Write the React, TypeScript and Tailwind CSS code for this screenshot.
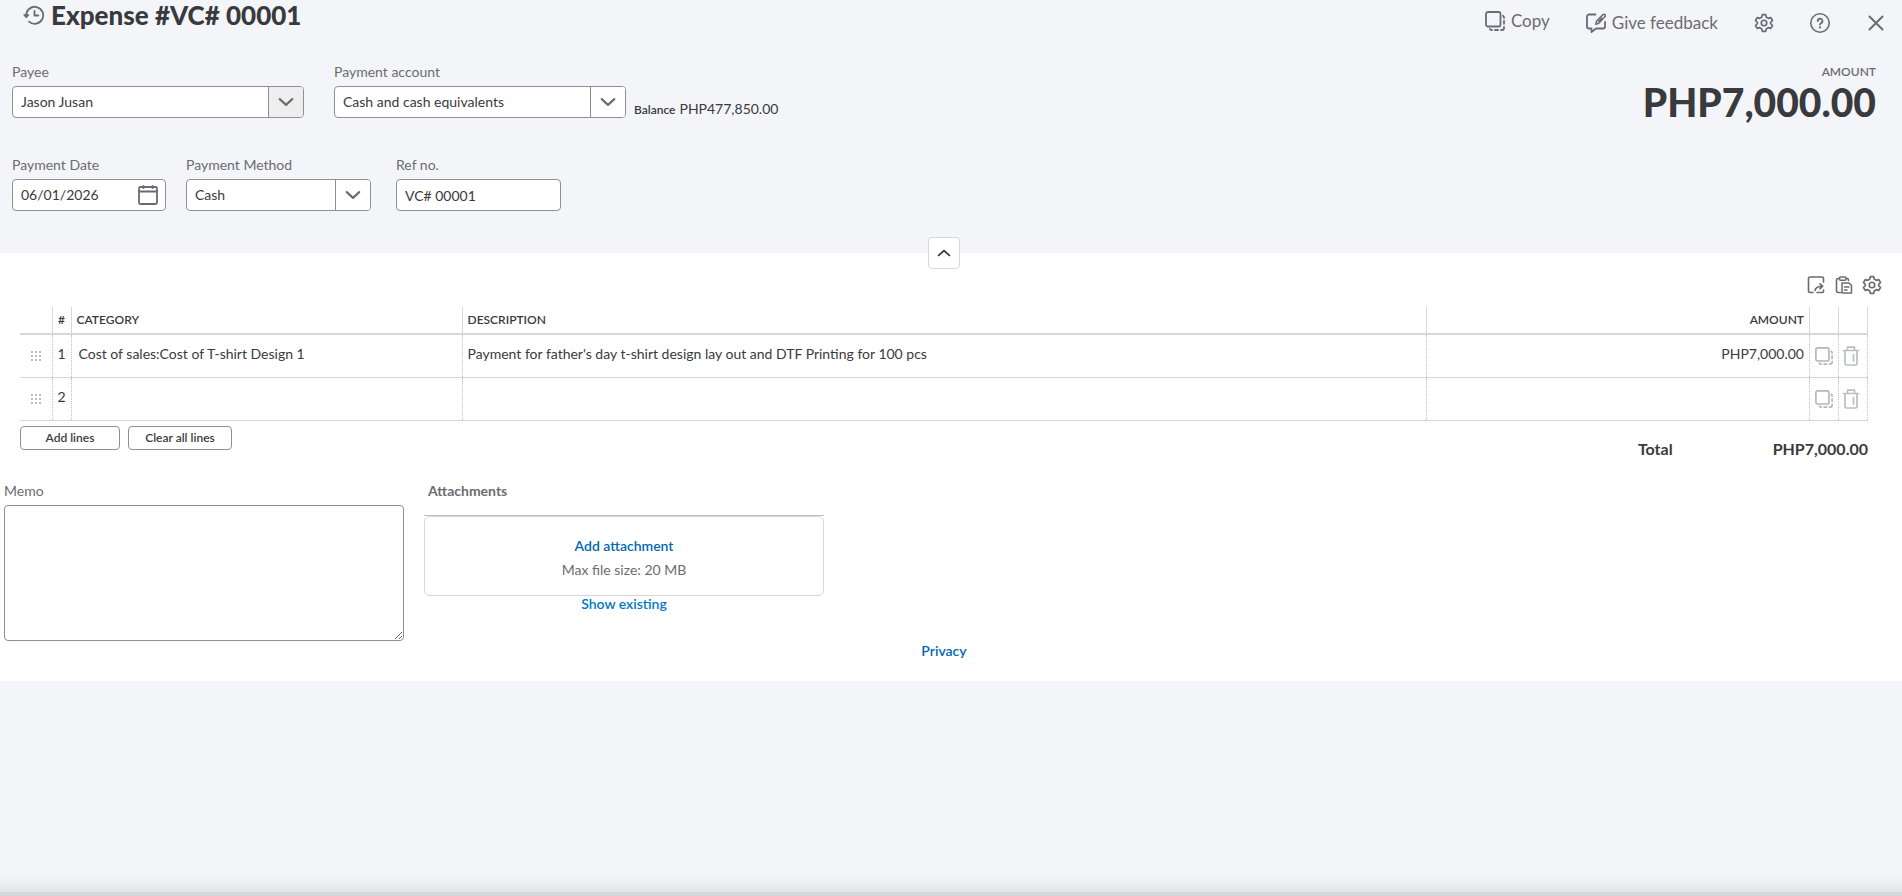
import { useState } from "react";
import type { ReactNode } from "react";

type Line = {
  id: number;
  category: string;
  description: string;
  amount: string;
};

type SelectFieldProps = {
  id: string;
  label: string;
  options: string[];
  width: string;
  active?: boolean;
};

const initialLines: Line[] = [
  {
    id: 1,
    category: "Cost of sales:Cost of T-shirt Design 1",
    description: "Payment for father's day t-shirt design lay out and DTF Printing for 100 pcs",
    amount: "PHP7,000.00",
  },
  { id: 2, category: "", description: "", amount: "" },
];

function Icon({
  className,
  size = 24,
  children,
}: {
  className: string;
  size?: number;
  children: ReactNode;
}) {
  return (
    <svg
      viewBox={`0 0 ${size} ${size}`}
      fill="none"
      stroke="currentColor"
      strokeWidth="2"
      strokeLinecap="round"
      strokeLinejoin="round"
      className={className}
      aria-hidden="true"
    >
      {children}
    </svg>
  );
}

function HistoryIcon() {
  return (
    <Icon className="h-6 w-6">
      <path d="M5.2 12.5A8.5 8.5 0 1 1 8 18.600" strokeWidth="1.800" />
      <path d="M3 11.800h4.600l-2.300 2.800z" fill="currentColor" strokeWidth="1.200" />
      <path d="M13.500 8v4.500h3.800" strokeWidth="1.800" />
    </Icon>
  );
}

function CopyIcon({ className }: { className: string }) {
  return (
    <Icon className={className} size={20}>
      <rect x="1" y="1" width="14.500" height="14.500" rx="2" strokeWidth="1.800" />
      <path
        d="M18 4.800a2 2 0 0 1 1 1.700v.5M19 9.800v3M19 16v1a2 2 0 0 1-2 2h-1M13 19h-3M7 19h-.500a2 2 0 0 1-1.700-1"
        strokeWidth="1.800"
      />
    </Icon>
  );
}

function FeedbackIcon() {
  return (
    <Icon className="h-5 w-5" size={20}>
      <path
        d="M9.500 1.500H3a2 2 0 0 0-2 2v10a2 2 0 0 0 2 2h2.500V19l4.500-3.500h7a2 2 0 0 0 2-2V9"
        strokeWidth="1.800"
      />
      <path
        d="M9.800 11.200l.9-3.200 6.300-6.400a1.400 1.400 0 0 1 2 2L12.800 10.200zM12.800 8.200l3-3"
        strokeWidth="1.500"
      />
    </Icon>
  );
}

function GearIcon({ className }: { className: string }) {
  return (
    <Icon className={className}>
      <path d="M10 2h4l.8 3 2.400 1.400 3-.9 2 3.500-2.200 2.200v1.600l2.200 2.200-2 3.500-3-.9-2.400 1.400-.8 3h-4l-.8-3-2.400-1.400-3 .9-2-3.500L4 12.800v-1.600L1.800 9l2-3.500 3 .9L9.200 5z" />
      <circle cx="12" cy="12" r="3.300" />
    </Icon>
  );
}

function HelpIcon() {
  return (
    <Icon className="h-6 w-6">
      <circle cx="12" cy="12" r="9.200" strokeWidth="1.600" />
      <path d="M9.800 10a2.300 2.300 0 1 1 3.400 2c-.8.400-1.200.8-1.200 1.600" strokeWidth="1.900" />
      <path d="M12 16.300v.1" strokeWidth="2.200" />
    </Icon>
  );
}

function CalendarIcon() {
  return (
    <Icon className="h-5 w-5" size={20}>
      <rect x="1" y="2" width="18" height="17" rx="1.500" strokeWidth="1.800" />
      <path d="M1 6.500h18M5.500 1v2M14.500 1v2" strokeWidth="1.800" />
    </Icon>
  );
}

function TrashIcon() {
  return (
    <Icon className="h-5 w-5" size={20}>
      <path d="M2.500 4.500h15M6.500 4.200V1.200h7v3M4 5v12.500A1.500 1.500 0 0 0 5.500 19h9a1.500 1.500 0 0 0 1.500-1.500V5M12.500 8.500v6.500" strokeWidth="1.700" />
    </Icon>
  );
}

function ExportIcon() {
  return (
    <Icon className="h-5 w-5" size={20}>
      <path d="M7 17.500H4A1.500 1.500 0 0 1 2.500 16V3.500A1.500 1.500 0 0 1 4 2h12a1.500 1.500 0 0 1 1.500 1.500V7" strokeWidth="1.600" />
      <path d="M9 15.500c.5-2.800 2.500-4.300 7.500-4.300M14 8.800l2.700 2.400-2.700 2.600M17.500 15v1.500a1 1 0 0 1-1 1h-5.500" strokeWidth="1.600" />
    </Icon>
  );
}

function PasteIcon() {
  return (
    <Icon className="h-5 w-5" size={20}>
      <path d="M5.500 3.500H4A1.500 1.500 0 0 0 2.500 5v11A1.500 1.500 0 0 0 4 17.500h2.500M12 3.500h1A1.500 1.500 0 0 1 14.500 5v.5" strokeWidth="1.600" />
      <rect x="5.500" y="2" width="6.500" height="3.200" rx="1" strokeWidth="1.500" />
      <path d="M8 8h7l2.500 2.500v7.500H8zM10.500 12h4.500M10.500 15h2.500" strokeWidth="1.500" />
    </Icon>
  );
}

function DragHandle() {
  return (
    <svg viewBox="0 0 12 12" className="h-3 w-3" fill="currentColor" aria-hidden="true">
      {[1, 5, 9].map((y) =>
        [1, 5, 9].map((x) => <rect key={`${x}-${y}`} x={x} y={y} width="2" height="2" />)
      )}
    </svg>
  );
}

function SelectField({ id, label, options, width, active }: SelectFieldProps) {
  return (
    <div className={`flex flex-col gap-1 ${width}`}>
      <label htmlFor={id} className="text-sm leading-5 text-[#6b6c72]">
        {label}
      </label>
      <div className="relative">
        <select
          id={id}
          className="block h-8 w-full appearance-none rounded-sm border border-[#8d9096] bg-white pr-10 pl-2 text-sm"
        >
          {options.map((o) => (
            <option key={o}>{o}</option>
          ))}
        </select>
        <span
          className={`pointer-events-none absolute inset-y-px right-px flex w-[35px] items-center justify-center rounded-r-[3px] border-l border-[#8d9096] text-[#6b6c72] ${
            active ? "bg-[#eeeeef]" : "bg-white"
          }`}
        >
          <Icon className="h-5 w-5">
            <path d="M4.500 8.500l7.500 7 7.500-7" strokeWidth="2.600" />
          </Icon>
        </span>
      </div>
    </div>
  );
}

export default function App() {
  const [lines, setLines] = useState<Line[]>(initialLines);
  const [open, setOpen] = useState(true);
  const [date, setDate] = useState("06/01/2026");
  const [refNo, setRefNo] = useState("VC# 00001");
  const [memo, setMemo] = useState("");

  function emptyLine(id: number): Line {
    return { id, category: "", description: "", amount: "" };
  }

  function addLine() {
    setLines((prev) => [...prev, emptyLine(prev.length + 1)]);
  }

  function clearLines() {
    setLines([emptyLine(1), emptyLine(2)]);
  }

  const headCell = "border-r border-[#d4d7dc] px-[5px] font-semibold";
  const bodyCell = "border-r border-dotted border-[#babec5] px-[5px] pb-1";

  return (
    <div className="flex min-h-screen flex-col bg-[#f4f5f8] font-[Lato,sans-serif] text-[#393a3d]">
      {/* Title bar */}
      <header className="flex h-[46px] items-start justify-between pr-3.5 pl-[21px]">
        <div className="flex items-center gap-1.5">
          <button type="button" aria-label="Recent transactions" className="text-[#6b6c72]">
            <HistoryIcon />
          </button>
          <h1 className="text-[26px] leading-[30px] font-black">Expense #VC# 00001</h1>
        </div>
        <div className="flex h-[46px] items-center text-[17px] text-[#6b6c72]">
          <button type="button" className="flex items-center gap-1.5 pb-1">
            <CopyIcon className="h-5 w-5" />
            Copy
          </button>
          <button type="button" className="ml-9 flex items-center gap-1.5">
            <FeedbackIcon />
            Give feedback
          </button>
          <button type="button" aria-label="Settings" className="ml-9">
            <GearIcon className="h-5 w-5" />
          </button>
          <button type="button" aria-label="Help" className="ml-[34px]">
            <HelpIcon />
          </button>
          <button type="button" aria-label="Close" className="ml-8">
            <Icon className="h-6 w-6">
              <path d="M5.500 5.500l13 13M18.500 5.500l-13 13" />
            </Icon>
          </button>
        </div>
      </header>

      {/* Expense details */}
      <section className="relative flex justify-between px-3 pt-4 pb-[42px]">
        {open && (
          <div>
            <div className="flex items-end">
              <SelectField id="payee" label="Payee" options={["Jason Jusan"]} width="w-[292px]" active />
              <div className="ml-[30px]">
                <SelectField
                  id="account"
                  label="Payment account"
                  options={["Cash and cash equivalents"]}
                  width="w-[292px]"
                />
              </div>
              <p className="ml-2 flex items-baseline gap-1 text-sm leading-4">
                <span className="text-xs font-semibold">Balance</span> PHP477,850.00
              </p>
            </div>

            <div className="mt-[37px] flex items-end">
              <div className="flex w-[154px] flex-col gap-1">
                <label htmlFor="date" className="text-sm leading-5 text-[#6b6c72]">
                  Payment Date
                </label>
                <div className="flex h-8 items-center rounded-sm border border-[#8d9096] bg-white pr-[7px] pl-2">
                  <input
                    id="date"
                    className="w-full min-w-0 text-sm"
                    value={date}
                    onChange={(e) => setDate(e.target.value)}
                  />
                  <button type="button" aria-label="Open calendar" className="text-[#6b6c72]">
                    <CalendarIcon />
                  </button>
                </div>
              </div>
              <div className="ml-5">
                <SelectField id="method" label="Payment Method" options={["Cash"]} width="w-[185px]" />
              </div>
              <div className="ml-[25px] flex w-[165px] flex-col gap-1">
                <label htmlFor="ref" className="text-sm leading-5 text-[#6b6c72]">
                  Ref no.
                </label>
                <input
                  id="ref"
                  className="h-8 rounded-sm border border-[#8d9096] bg-white px-2 text-sm"
                  value={refNo}
                  onChange={(e) => setRefNo(e.target.value)}
                />
              </div>
            </div>
          </div>
        )}
        <div className="ml-auto pr-3.5 text-right">
          <p className="text-xs leading-5 font-semibold text-[#6b6c72]">AMOUNT</p>
          <p className="text-[39px] leading-10 font-black">PHP7,000.00</p>
        </div>
        <button
          type="button"
          aria-label="Toggle details"
          onClick={() => setOpen(!open)}
          className="absolute -bottom-4 left-1/2 -ml-[23px] flex h-8 w-8 items-center justify-center rounded-sm border border-[#d4d7dc] bg-white"
        >
          <Icon className="h-4 w-4">
            <path d="M4 15.500l8-7 8 7" strokeWidth="2.800" />
          </Icon>
        </button>
      </section>

      <main className="bg-white pt-[22px] pb-5">
        <div className="flex justify-end gap-2 pr-5 text-[#6b6c72]">
          <button type="button" aria-label="Export lines">
            <ExportIcon />
          </button>
          <button type="button" aria-label="Paste lines">
            <PasteIcon />
          </button>
          <button type="button" aria-label="Table settings">
            <GearIcon className="h-5 w-5" />
          </button>
        </div>

        <div className="mt-3 pr-[34px] pl-5">
          <table className="w-full table-fixed border-collapse text-left text-sm">
            <colgroup>
              <col className="w-8" />
              <col className="w-[19px]" />
              <col className="w-[391px]" />
              <col />
              <col className="w-[383px]" />
              <col className="w-[29px]" />
              <col className="w-[29px]" />
            </colgroup>
            <thead>
              <tr className="h-[27px] border-b-2 border-[#d4d7dc] text-xs">
                <th className={headCell} aria-label="Reorder" />
                <th className="border-r border-[#d4d7dc] text-center font-semibold">#</th>
                <th className={headCell}>CATEGORY</th>
                <th className={headCell}>DESCRIPTION</th>
                <th className={`${headCell} text-right`}>AMOUNT</th>
                <th className={headCell} aria-label="Duplicate" />
                <th className={headCell} aria-label="Delete" />
              </tr>
            </thead>
            <tbody>
              {lines.map((line) => (
                <tr key={line.id} className="h-[43px] border-b border-[#d4d7dc]">
                  <td className="border-r border-dotted border-[#babec5] text-[#babec5]">
                    <span className="flex justify-center">
                      <DragHandle />
                    </span>
                  </td>
                  <td className="border-r border-dotted border-[#babec5] pb-1 text-center">{line.id}</td>
                  <td className="border-r border-dotted border-[#babec5] px-[7px] pb-1">{line.category}</td>
                  <td className={bodyCell}>{line.description}</td>
                  <td className={`${bodyCell} text-right`}>{line.amount}</td>
                  <td className="border-r border-dotted border-[#babec5] text-[#b3b5ba]">
                    <button type="button" aria-label="Duplicate line" className="mx-auto block">
                      <CopyIcon className="h-[18px] w-[18px]" />
                    </button>
                  </td>
                  <td className="border-r border-dotted border-[#babec5] pr-1 text-[#babec5]">
                    <button type="button" aria-label="Delete line" className="mx-auto block">
                      <TrashIcon />
                    </button>
                  </td>
                </tr>
              ))}
            </tbody>
          </table>

          <div className="flex justify-between pt-[5px]">
            <div className="flex gap-2">
              <button
                type="button"
                onClick={addLine}
                className="h-6 w-[100px] rounded-sm border border-[#8d9096] text-xs font-semibold"
              >
                Add lines
              </button>
              <button
                type="button"
                onClick={clearLines}
                className="h-6 w-[104px] rounded-sm border border-[#8d9096] text-xs font-semibold"
              >
                Clear all lines
              </button>
            </div>
            <div className="flex gap-[100px] pt-[11px] text-base leading-6 font-bold">
              <span>Total</span>
              <span>PHP7,000.00</span>
            </div>
          </div>
        </div>

        <div className="flex gap-5 pt-5 pl-1">
          <div className="flex w-[400px] flex-col gap-1">
            <label htmlFor="memo" className="text-sm leading-5 text-[#6b6c72]">
              Memo
            </label>
            <textarea
              id="memo"
              className="h-[136px] rounded-sm border border-[#8d9096] bg-white p-2 text-sm"
              value={memo}
              onChange={(e) => setMemo(e.target.value)}
            />
          </div>
          <div className="w-[400px] text-center text-sm leading-5">
            <h2 className="px-1 text-left font-bold text-[#6b6c72]">Attachments</h2>
            <div className="mt-3.5 border-t border-[#babec5]">
              <div className="flex h-20 flex-col items-center justify-center gap-1 rounded-md border border-[#d4d7dc] pt-1">
                <button type="button" className="font-semibold text-[#0068b3]">
                  Add attachment
                </button>
                <span className="text-[#6b6c72]">Max file size: 20 MB</span>
              </div>
            </div>
            <a href="#existing" className="block leading-4 font-semibold text-[#0077c5]">
              Show existing
            </a>
          </div>
        </div>

        <div className="pr-3.5 text-center text-sm leading-5">
          <a href="#privacy" className="font-semibold text-[#0068b3]">
            Privacy
          </a>
        </div>
      </main>

      <div className="mt-auto h-5 border-b-4 border-[#d6d7da] bg-linear-to-b from-[#f4f5f8] to-[#e3e4e8]" />
    </div>
  );
}
